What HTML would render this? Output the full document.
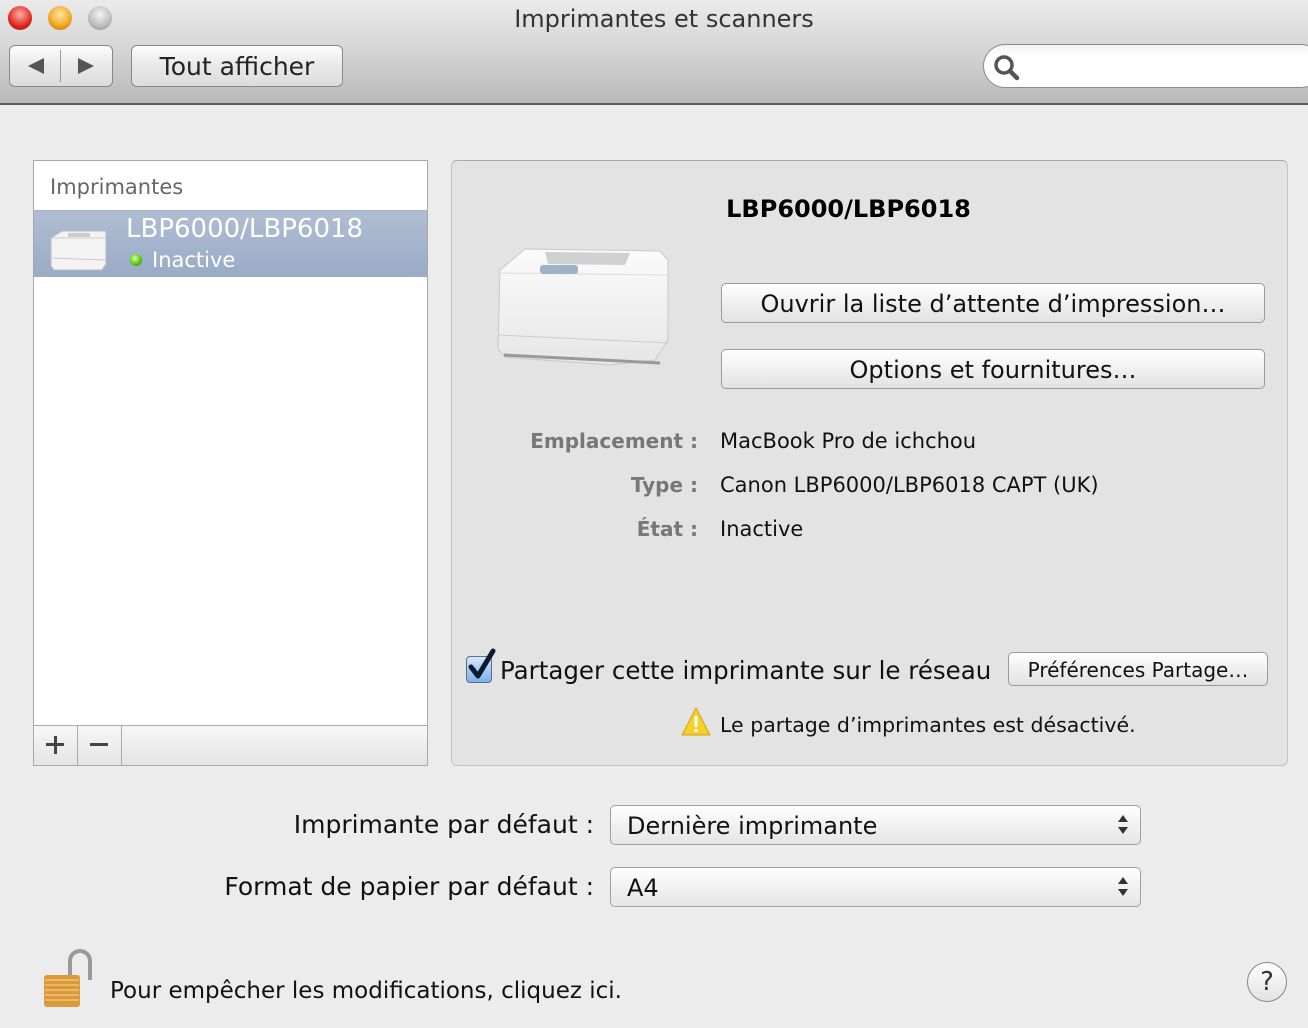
<!DOCTYPE html>
<html><head><meta charset="utf-8"><style>
*{margin:0;padding:0;box-sizing:border-box}
body{width:1308px;height:1028px;background:#ececec;font-family:"DejaVu Sans","Liberation Sans",sans-serif;position:relative;overflow:hidden;color:#111}
.a{position:absolute;white-space:nowrap}
.tb{left:0;top:0;width:1308px;height:105px;background:linear-gradient(#ebebeb,#d4d4d4 50%,#b9b9b9);border-bottom:2px solid #5e5e5e}
.light{width:24px;height:24px;border-radius:50%;top:6px}
.btn{background:linear-gradient(#fdfdfd,#e9e9e9 50%,#dcdcdc);border:1px solid #888;border-radius:6px}
.pbtn{background:linear-gradient(#ffffff,#f0f0f0 50%,#e2e2e2);border:1px solid #9a9a9a;border-radius:5px;text-align:center;font-size:24px}
.lbl{color:#777;font-weight:bold;font-size:20px;text-align:right;width:300px;left:398px}
.val{font-size:21px;left:720px}
.sel{background:linear-gradient(#fff,#f1f1f1 50%,#e6e6e6);border:1px solid #a0a0a0;border-radius:5px;font-size:24px;padding-left:16px;line-height:38px}
</style></head><body>
<div class="a tb"></div>
<div class="a light" style="left:8px;background:radial-gradient(circle at 50% 35%,#ffb0a8,#e0261c 60%,#9a120c)"></div>
<div class="a light" style="left:48px;background:radial-gradient(circle at 50% 35%,#ffe6a0,#f0a420 60%,#b46d08)"></div>
<div class="a light" style="left:88px;background:radial-gradient(circle at 50% 35%,#f4f4f4,#bcbcbc 60%,#888)"></div>
<div class="a" style="left:0;width:1308px;top:5px;text-align:center;font-size:24px;color:#333;margin-left:10px">Imprimantes et scanners</div>
<div class="a btn" style="left:9px;top:45px;width:104px;height:42px"></div>
<div class="a" style="left:60px;top:50px;width:1px;height:32px;background:#999"></div>
<svg class="a" style="left:26px;top:56px" width="20" height="20"><path d="M2 10 L18 2 L18 18Z" fill="#555"/></svg>
<svg class="a" style="left:76px;top:56px" width="20" height="20"><path d="M18 10 L2 2 L2 18Z" fill="#555"/></svg>
<div class="a btn" style="left:131px;top:45px;width:212px;height:42px;text-align:center;font-size:25px;line-height:42px;color:#222">Tout afficher</div>
<div class="a" style="left:983px;top:44px;width:340px;height:44px;border:1px solid #8a8a8a;border-radius:22px;background:linear-gradient(#f2f2f2,#fff 30%)"></div>
<svg class="a" style="left:992px;top:52px" width="30" height="30"><circle cx="12" cy="13" r="8" fill="none" stroke="#555" stroke-width="3.5"/><path d="M18 19 L25 26" stroke="#555" stroke-width="4.5" stroke-linecap="round"/></svg>

<div class="a" style="left:33px;top:160px;width:395px;height:606px;background:#fff;border:1px solid #a8a8a8"></div>
<div class="a" style="left:50px;top:175px;font-size:21px;color:#666">Imprimantes</div>
<div class="a" style="left:34px;top:210px;width:393px;height:67px;background:linear-gradient(#b0bdd3,#9aabc6);border-top:1px solid #a2b1cb"></div>
<svg class="a" style="left:48px;top:228px" width="62" height="44"><path d="M3 10 L14 3 L58 3 L58 36 L54 42 L6 42 L3 38Z" fill="#f3f3f3" stroke="#bbb"/><path d="M3 10 L58 10" stroke="#ccc"/><path d="M4 30 L58 32" stroke="#ccc"/><rect x="20" y="5" width="22" height="4" fill="#ccc"/></svg>
<div class="a" style="left:126px;top:214px;font-size:26px;color:#fff">LBP6000/LBP6018</div>
<div class="a" style="left:130px;top:254px;width:12px;height:12px;border-radius:50%;background:radial-gradient(circle at 40% 35%,#d6ff9a,#55c10c 60%,#2d7a00)"></div>
<div class="a" style="left:152px;top:248px;font-size:21px;color:#fff">Inactive</div>
<div class="a" style="left:34px;top:725px;width:393px;height:40px;background:linear-gradient(#f7f7f7,#e4e4e4);border-top:1px solid #aaa"></div>
<div class="a" style="left:77px;top:725px;width:1px;height:40px;background:#aaa"></div>
<div class="a" style="left:121px;top:725px;width:1px;height:40px;background:#aaa"></div>
<div class="a" style="left:46px;top:743px;width:18px;height:3px;background:#444"></div>
<div class="a" style="left:53.5px;top:736px;width:3px;height:18px;background:#444"></div>
<div class="a" style="left:90px;top:743px;width:18px;height:3px;background:#444"></div>

<div class="a" style="left:451px;top:160px;width:837px;height:606px;background:#e3e3e3;border:1px solid #c2c2c2;border-top-color:#a8a8a8;border-radius:6px"></div>
<div class="a" style="left:451px;top:195px;width:795px;text-align:center;font-size:24px;font-weight:bold;color:#000">LBP6000/LBP6018</div>
<svg class="a" style="left:490px;top:245px" width="185" height="130"><defs><linearGradient id="g" x1="0" y1="0" x2="0" y2="1"><stop offset="0" stop-color="#fbfbfb"/><stop offset="1" stop-color="#e6e6e6"/></linearGradient></defs><path d="M10 25 L35 4 L170 6 L178 15 L178 95 L165 115 L120 120 L15 112 L8 104Z" fill="url(#g)" stroke="#c8c8c8"/><path d="M55 7 L140 8 L135 20 L58 19Z" fill="#d0d0d0"/><path d="M10 28 L178 30" stroke="#ddd"/><path d="M8 90 L178 98" stroke="#ccc"/><rect x="50" y="20" width="38" height="9" rx="3" fill="#9fb2c7"/><path d="M14 110 L170 118" stroke="#999" stroke-width="3"/></svg>
<div class="a pbtn" style="left:721px;top:283px;width:544px;height:40px;line-height:40px">Ouvrir la liste d’attente d’impression…</div>
<div class="a pbtn" style="left:721px;top:349px;width:544px;height:40px;line-height:40px">Options et fournitures…</div>
<div class="a lbl" style="top:429px">Emplacement :</div>
<div class="a lbl" style="top:473px">Type :</div>
<div class="a lbl" style="top:517px">État :</div>
<div class="a val" style="top:429px">MacBook Pro de ichchou</div>
<div class="a val" style="top:473px">Canon LBP6000/LBP6018 CAPT (UK)</div>
<div class="a val" style="top:517px">Inactive</div>
<div class="a" style="left:466px;top:656px;width:26px;height:27px;border:1px solid #5a6e88;border-radius:4px;background:linear-gradient(#d6e7fb,#7cb0e8)"></div>
<svg class="a" style="left:464px;top:648px" width="34" height="34"><path d="M7 19 L14 28 L29 3" fill="none" stroke="#0c1a30" stroke-width="5" stroke-linecap="round" stroke-linejoin="round"/></svg>
<div class="a" style="left:500px;top:656px;font-size:24.5px">Partager cette imprimante sur le réseau</div>
<div class="a pbtn" style="left:1008px;top:652px;width:260px;height:34px;line-height:34px;font-size:20px">Préférences Partage…</div>
<svg class="a" style="left:680px;top:706px" width="32" height="32"><path d="M16 2 L30 29 L2 29Z" fill="#f7cf2c" stroke="#d4a410" stroke-linejoin="round"/><rect x="14.5" y="10" width="3" height="11" fill="#fff"/><rect x="14.5" y="23" width="3" height="3" fill="#fff"/></svg>
<div class="a" style="left:720px;top:713px;font-size:20.5px">Le partage d’imprimantes est désactivé.</div>

<div class="a" style="left:194px;top:810px;width:400px;text-align:right;font-size:25px">Imprimante par défaut :</div>
<div class="a sel" style="left:610px;top:805px;width:531px;height:40px;line-height:40px">Dernière imprimante</div>
<div class="a" style="left:194px;top:872px;width:400px;text-align:right;font-size:25px">Format de papier par défaut :</div>
<div class="a sel" style="left:610px;top:867px;width:531px;height:40px;line-height:40px">A4</div>
<svg class="a" style="left:1116px;top:812px" width="14" height="26"><path d="M2 10 L7 3 L12 10Z M2 15 L7 22 L12 15Z" fill="#333"/></svg>
<svg class="a" style="left:1116px;top:874px" width="14" height="26"><path d="M2 10 L7 3 L12 10Z M2 15 L7 22 L12 15Z" fill="#333"/></svg>

<svg class="a" style="left:40px;top:948px" width="60" height="62"><path d="M30 30 V13 A10 10 0 0 1 50 13 V32" fill="none" stroke="#999" stroke-width="4"/><rect x="4" y="27" width="36" height="32" rx="3" fill="#d89a3c"/><g stroke="#f2c170" stroke-width="1.5"><path d="M5 32H39M5 37H39M5 42H39M5 47H39M5 52H39"/></g></svg>
<div class="a" style="left:110px;top:978px;font-size:23px">Pour empêcher les modifications, cliquez ici.</div>
<div class="a" style="left:1247px;top:962px;width:40px;height:40px;border-radius:50%;border:1px solid #888;background:linear-gradient(#fff,#e2e2e2);text-align:center;font-size:26px;line-height:38px;color:#333">?</div>
</body></html>
